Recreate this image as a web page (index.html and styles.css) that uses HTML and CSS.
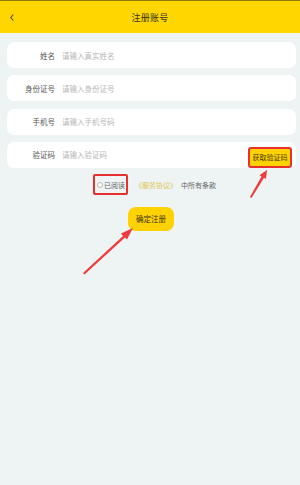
FILE: index.html
```html
<!DOCTYPE html>
<html lang="zh">
<head>
<meta charset="utf-8">
<link rel="stylesheet" href="styles.css">
</head>
<body>
<div class="page">
  <header class="topbar">
    <svg class="back" width="6" height="9" viewBox="0 0 6 9"><path d="M4.3 1.5 L1.8 4.5 L4.3 7.5" fill="none" stroke="#5a4a00" stroke-width="1.1"/></svg>
    <div class="title">注册账号</div>
  </header>
  <main class="form">
    <div class="row"><span class="label">姓名</span><span class="ph">请输入真实姓名</span></div>
    <div class="row"><span class="label">身份证号</span><span class="ph">请输入身份证号</span></div>
    <div class="row"><span class="label">手机号</span><span class="ph">请输入手机号码</span></div>
    <div class="row"><span class="label">验证码</span><span class="ph">请输入验证码</span><span class="code-btn">获取验证码</span></div>
    <div class="agree">
      <span class="check-wrap"><span class="circle"></span><span class="agree-txt">已阅读</span></span>
      <span class="link">《服务协议》</span>
      <span class="agree-txt">中所有条款</span>
    </div>
    <div class="submit-wrap"><span class="submit">确定注册</span></div>
  </main>
  <svg class="arrows" width="300" height="485" viewBox="0 0 300 485">
    <path d="M250 197 L261.5 176.5 L259.5 175.2 L267 170 L266 179 L264 177.8 L251.5 198 Z" fill="#ee3b3b"/>
    <path d="M83 273 L123 236 L121 233.5 L133 228 L127 239.5 L125 237.5 L84.5 274.5 Z" fill="#ee3b3b"/>
  </svg>
</div>
</body>
</html>
```

FILE: styles.css
```css
* { box-sizing: border-box; }
html, body { margin: 0; padding: 0; }
body {
  width: 300px;
  height: 485px;
  background: #eef3f3;
  font-family: "Noto Sans CJK SC", "Noto Sans", sans-serif;
  overflow: hidden;
}
.page { position: relative; width: 300px; height: 485px; }
.topbar {
  height: 33px;
  background: #ffd600;
  border-top: 1px solid #8c7a12;
  display: flex;
  align-items: center;
  justify-content: center;
  position: relative;
}
.back { position: absolute; left: 9px; top: 12px; }
.title { font-size: 9px; color: #3a3520; letter-spacing: 0.2px; }
.form {
  padding: 9px 4px 0 7px;
  display: flex;
  flex-direction: column;
}
.row {
  height: 26px;
  background: #fff;
  border-radius: 7px;
  display: flex;
  align-items: center;
  margin-bottom: 7.3px;
  font-size: 7.5px;
  position: relative;
}
.label { width: 48px; text-align: right; color: #555; }
.ph { margin-left: 7px; color: #b8b8b8; }
.code-btn {
  position: absolute;
  right: 4px;
  top: 5px;
  height: 21px;
  width: 44px;
  background: #ffd200;
  color: #4a3f00;
  font-size: 7px;
  display: flex;
  align-items: center;
  justify-content: center;
  border: 2px solid #e8312f;
  border-radius: 3px;
}
.agree {
  display: flex;
  align-items: center;
  height: 21px;
  margin-top: -1px;
  padding-left: 86px;
  font-size: 7px;
  white-space: nowrap;
}
.check-wrap {
  display: flex;
  align-items: center;
  flex: none;
  height: 21px;
  width: 35px;
  border: 2px solid #e8312f;
  border-radius: 2px;
  padding-left: 2px;
  gap: 1px;
  overflow: hidden;
}
.circle {
  flex: none;
  width: 6px;
  height: 6px;
  border: 0.7px solid #bbb;
  border-radius: 50%;
  background: #fff;
}
.agree-txt { color: #666; }
.link { color: #e3c24d; margin-left: 7px; margin-right: 4px; }
.submit-wrap { padding-left: 121px; margin-top: 8px; }
.submit {
  display: inline-flex;
  align-items: center;
  justify-content: center;
  width: 46px;
  height: 24px;
  background: #ffd200;
  border-radius: 8px;
  font-size: 7.5px;
  color: #3a3520;
}
.arrows { position: absolute; left: 0; top: 0; pointer-events: none; }
```
